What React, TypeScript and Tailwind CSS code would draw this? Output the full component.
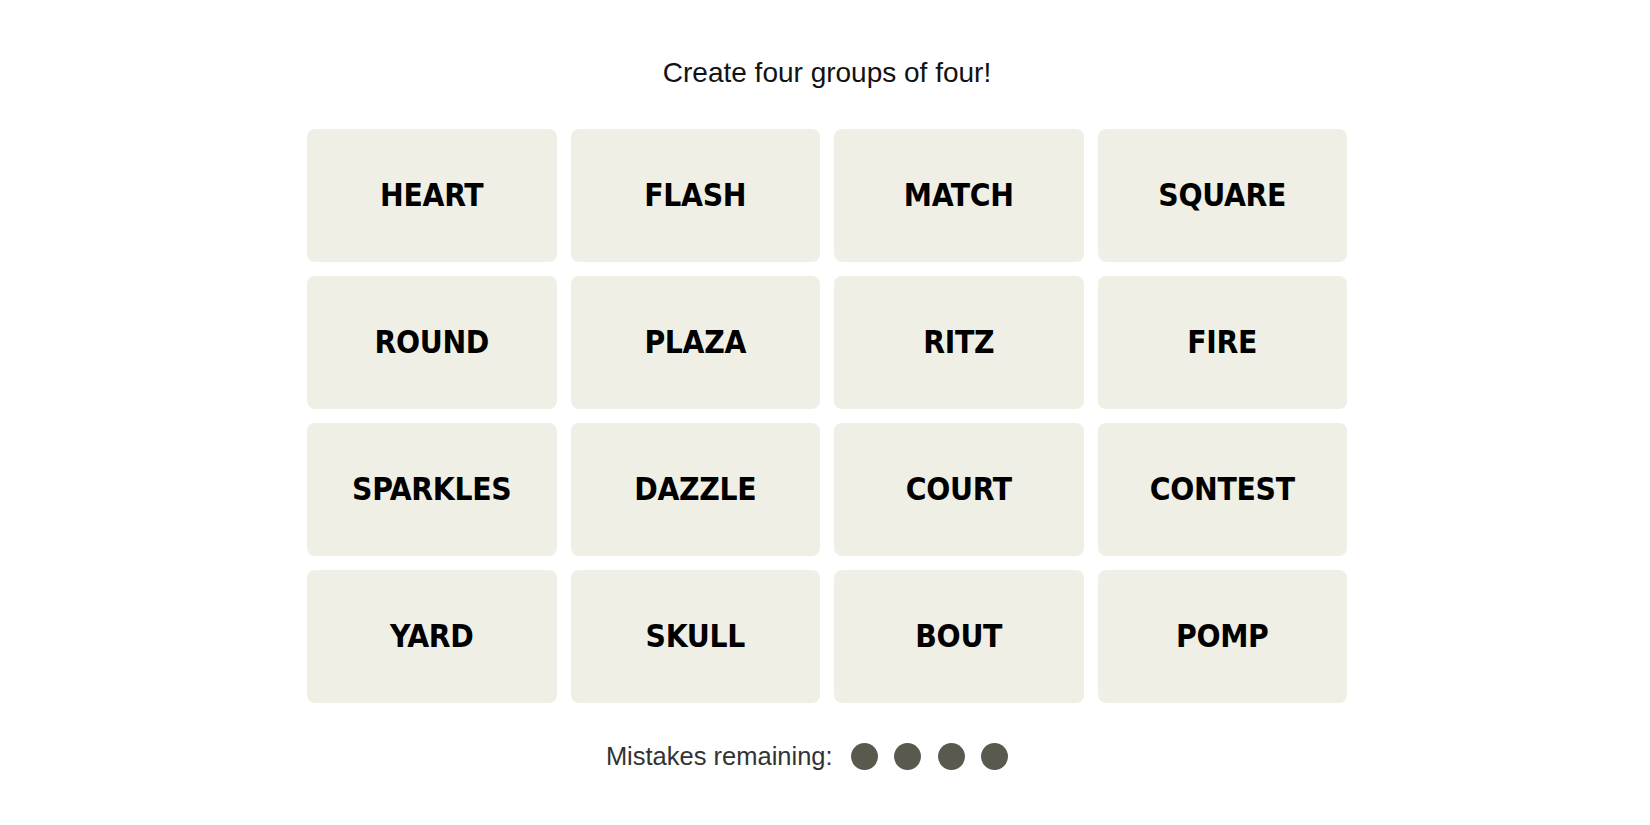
import React from "react";

const WORDS = [
  "HEART", "FLASH", "MATCH", "SQUARE",
  "ROUND", "PLAZA", "RITZ", "FIRE",
  "SPARKLES", "DAZZLE", "COURT", "CONTEST",
  "YARD", "SKULL", "BOUT", "POMP",
];

const MISTAKES_LEFT = 4;

export default function App() {
  return (
    <div className="flex min-h-screen w-full flex-col items-center bg-white pl-[4px] pt-[56px] font-['Liberation_Sans',Arial,sans-serif]">
      <p className="text-[28px] leading-[34px] text-[#121212]">Create four groups of four!</p>

      <div className="mt-[39px] grid w-[1040px] grid-cols-4 gap-x-[14px] gap-y-[14px]">
        {WORDS.map((w) => (
          <button
            key={w}
            className="flex h-[133px] items-center justify-center rounded-[8px] bg-[#efefe6] font-['DejaVu_Sans_Condensed','Liberation_Sans',sans-serif] text-[31.5px] font-bold tracking-[-0.3px] text-black"
          >
            {w}
          </button>
        ))}
      </div>

      <div className="mr-[40px] mt-[38px] flex items-center">
        <span className="text-[25.5px] leading-[30px] text-[#333333]">Mistakes remaining:</span>
        <div className="ml-[18px] flex gap-[16.5px]">
          {Array.from({ length: MISTAKES_LEFT }, (_, i) => (
            <span key={i} className="h-[27px] w-[27px] rounded-full bg-[#5a594e]" />
          ))}
        </div>
      </div>
    </div>
  );
}
